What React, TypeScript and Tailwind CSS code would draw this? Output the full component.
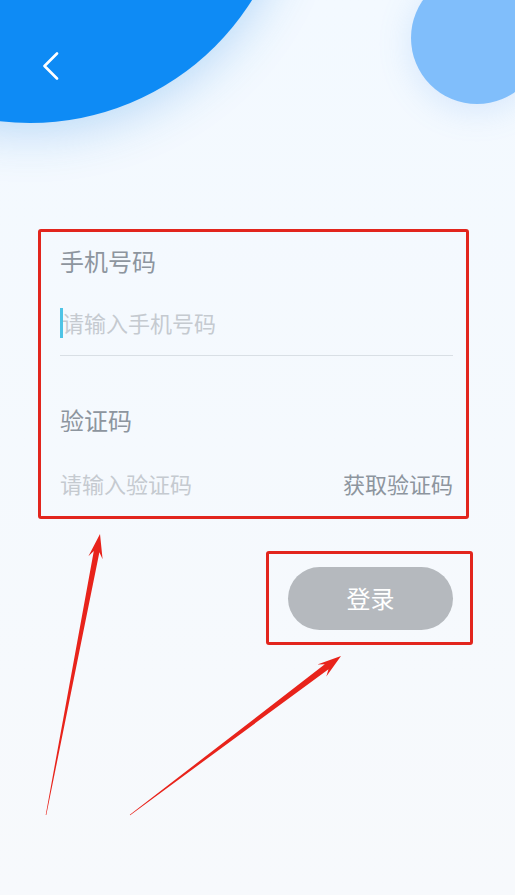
import React from 'react';

const font = { fontFamily: '"Noto Sans CJK SC", "Noto Sans", sans-serif' };

function Arrows() {
  return (
    <svg className="pointer-events-none absolute inset-0 z-20" width="515" height="895" viewBox="0 0 515 895">
      <polygon
        fill="#e8231b"
        points="46.29,815.06 99.4,552.3 102.6,559.2 100,534 88.4,556.3 93.8,551.1 45.71,814.94"
      />
      <polygon
        fill="#e8231b"
        points="130.18,815.24 328.5,669.3 326.3,676.4 341,656 317.4,664.6 324.8,664.3 129.82,814.76"
      />
    </svg>
  );
}

export default function App() {
  return (
    <div className="relative h-[895px] w-full overflow-hidden bg-gradient-to-b from-[#f3f9ff] to-[#f7f9fc]" style={font}>
      {/* decorative circles */}
      <div className="absolute left-[-232px] top-[-401px] h-[524px] w-[524px] rounded-full bg-[#0e8bf5] shadow-[0_8px_50px_rgba(40,140,230,0.3)]" />
      <div className="absolute left-[411px] top-[-28px] h-[132px] w-[132px] rounded-full bg-[#80befb] shadow-[0_6px_34px_rgba(90,160,240,0.2)]" />

      <div className="relative z-10 h-[229px] pl-[42px] pt-[52px]">
        <button type="button" aria-label="back" className="block">
          <svg width="18" height="28" viewBox="0 0 18 28" fill="none">
            <path d="M15 1.5 L2.5 14 L15 26.5" stroke="#ffffff" strokeWidth="2.6" strokeLinecap="round" strokeLinejoin="round" />
          </svg>
        </button>
      </div>

      <div className="relative z-10 ml-[38px] h-[290px] w-[431px] rounded-[3px] border-[3px] border-[#e2251d] pl-[19px] pr-[13px]">
        <div className="flex h-[58px] items-center text-[24px] text-[#8d959e]">手机号码</div>
        <div className="flex h-[66px] items-center border-b border-[#d9dfe5]">
          <span className="mr-[-1px] h-[30px] w-[3px] bg-[#4ec4e6]" />
          <span className="text-[22px] text-[#c5cad0]">请输入手机号码</span>
        </div>
        <div className="mt-[32px] flex h-[64px] items-center text-[24px] text-[#8d959e]">验证码</div>
        <div className="flex h-[63px] items-center justify-between">
          <span className="text-[22px] text-[#c5cad0]">请输入验证码</span>
          <span className="text-[22px] text-[#8d959e]">获取验证码</span>
        </div>
      </div>

      <div className="relative z-10 ml-[266px] mt-[32px] flex h-[94px] w-[207px] items-center rounded-[3px] border-[3px] border-[#e2251d] pl-[19px]">
        <button
          type="button"
          className="flex h-[63px] w-[165px] items-center justify-center rounded-full bg-[#b5b9be] text-[24px] text-white"
        >
          登录
        </button>
      </div>

      <Arrows />
    </div>
  );
}
